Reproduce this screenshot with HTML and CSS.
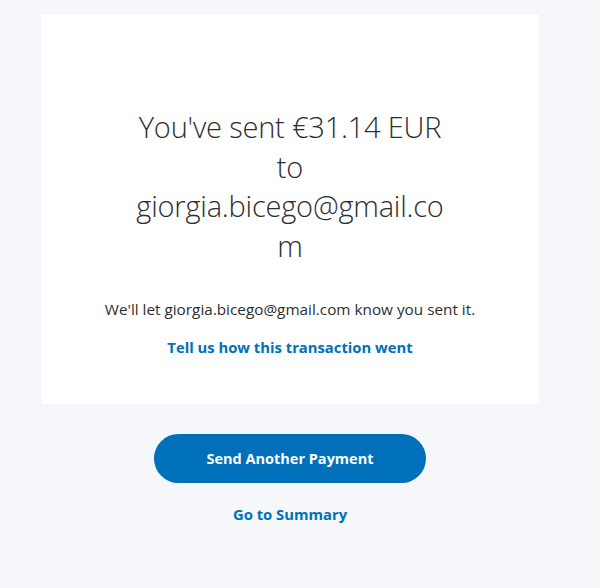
FILE: index.html
```html
<!DOCTYPE html>
<html>
<head>
<meta charset="utf-8">
<link rel="stylesheet" href="styles.css">
</head>
<body>
<div class="page">
  <div class="card">
    <h1 class="title">You've sent €31.14 EUR to giorgia.bicego@gmail.com</h1>
    <p class="note">We'll let giorgia.bicego@gmail.com know you sent it.</p>
    <a class="link" href="#">Tell us how this transaction went</a>
  </div>
  <div class="actions">
    <a class="btn" href="#">Send Another Payment</a>
    <a class="link summary" href="#">Go to Summary</a>
  </div>
</div>
</body>
</html>
```
FILE: styles.css
```css
html, body {
  margin: 0;
  padding: 0;
  background: #f5f7fa;
  font-family: "Open Sans", "Liberation Sans", sans-serif;
  color: #2c2e2f;
}
.page {
  width: 498px;
  margin-left: 41px;
  padding-top: 14px;
  display: flex;
  flex-direction: column;
}
.card {
  background: #fff;
  height: 390px;
  box-sizing: border-box;
  box-shadow: 0 0 1px rgba(0,0,0,0.06);
  display: flex;
  flex-direction: column;
  align-items: center;
  padding-top: 93px;
}
.title {
  margin: 0;
  width: 316px;
  font-weight: 300;
  font-size: 29px;
  line-height: 39.5px;
  text-align: center;
  overflow-wrap: anywhere;
  color: #2c2e2f;
  letter-spacing: -0.2px;
}
.note {
  margin: 33px 0 0;
  font-size: 15.3px;
  line-height: 22px;
}
.link {
  color: #0070ba;
  font-weight: 700;
  font-size: 14.8px;
  text-decoration: none;
  line-height: 22px;
  margin-top: 16px;
}
.actions {
  display: flex;
  flex-direction: column;
  align-items: center;
  padding-top: 30px;
}
.btn {
  width: 272px;
  height: 49px;
  border-radius: 25px;
  background: #0070ba;
  color: #fff;
  font-weight: 700;
  font-size: 14.5px;
  text-decoration: none;
  display: flex;
  align-items: center;
  justify-content: center;
}
.summary {
  margin-top: 20px;
}
```
